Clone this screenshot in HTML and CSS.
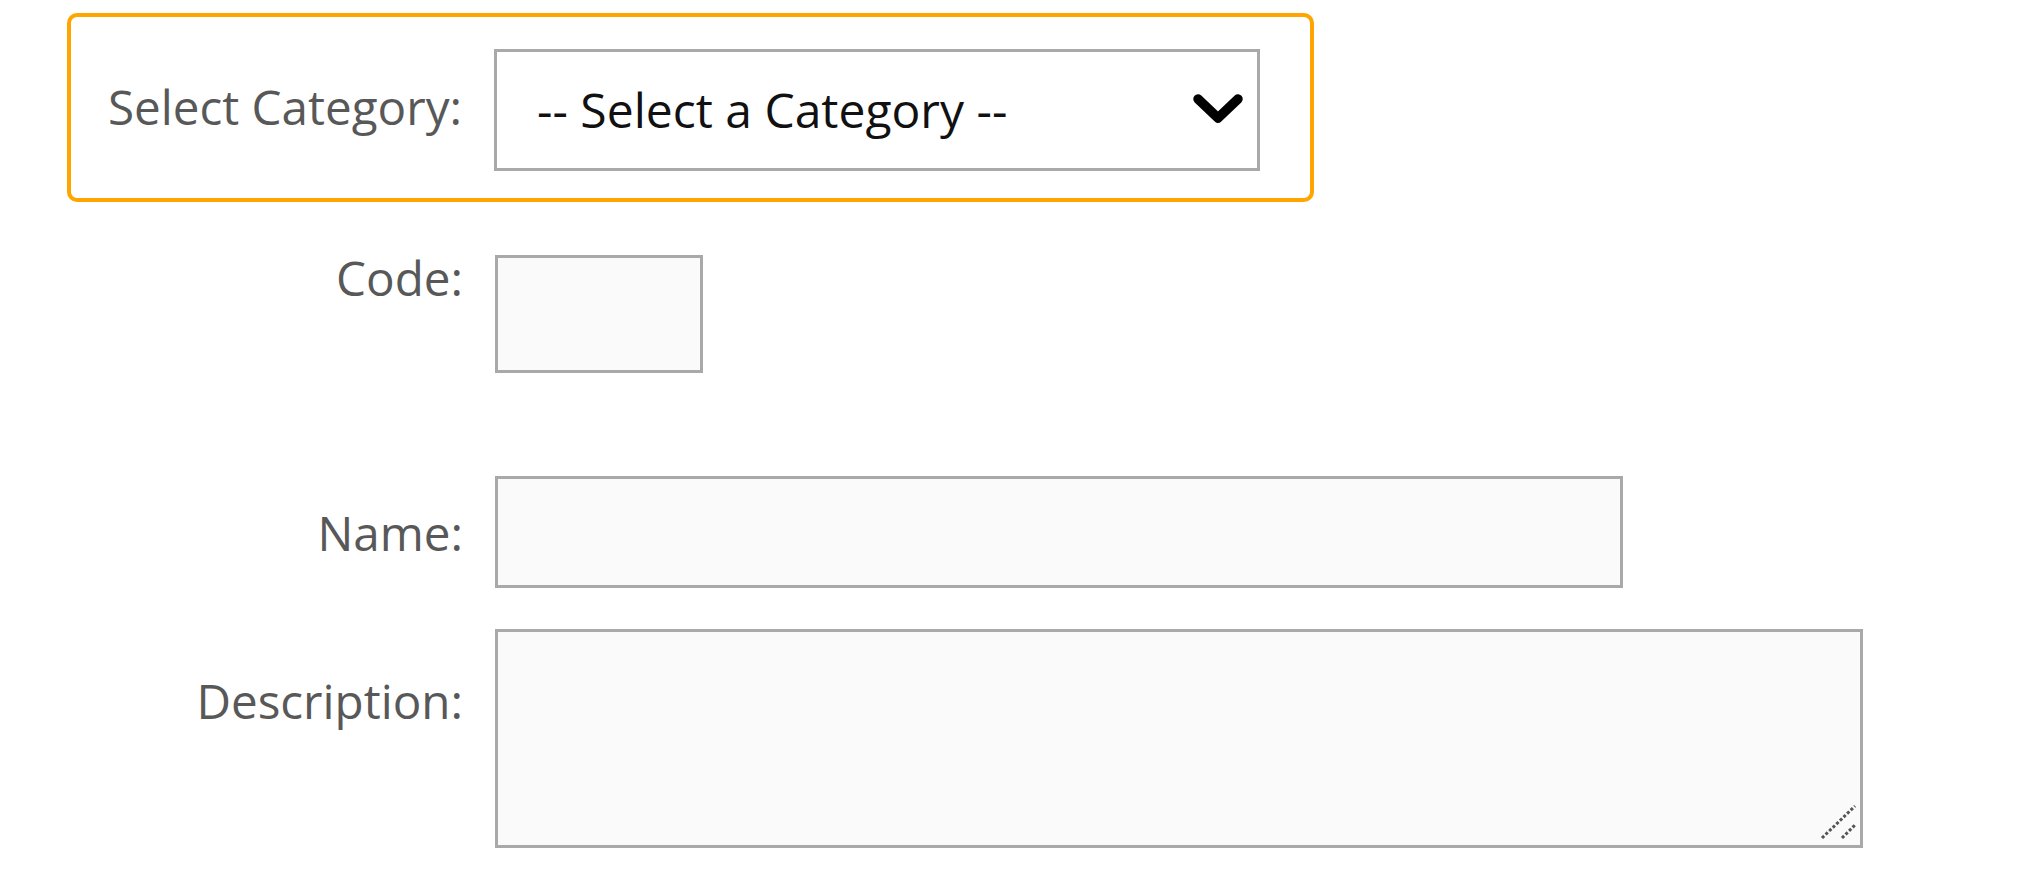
FILE: index.html
```html
<!DOCTYPE html>
<html lang="en">
<head>
<meta charset="utf-8">
<title>Category Form</title>
<link rel="stylesheet" href="styles.css">
</head>
<body>
<div class="page">
  <div class="highlight">
    <label class="lbl lbl-cat">Select Category:</label>
    <div class="select">
      <span class="select-text">-- Select a Category --</span>
      <svg class="chevron" width="52" height="32" viewBox="0 0 52 32"><polyline points="6,6 26,25 46,6" fill="none" stroke="#000" stroke-width="9.5" stroke-linecap="round" stroke-linejoin="round"/></svg>
    </div>
  </div>

  <div class="row row-code">
    <label class="lbl lbl-code">Code:</label>
    <input class="field field-code" type="text">
  </div>

  <div class="row row-name">
    <label class="lbl">Name:</label>
    <input class="field field-name" type="text">
  </div>

  <div class="row row-desc">
    <label class="lbl lbl-desc">Description:</label>
    <div class="ta-wrap">
      <textarea class="field field-desc"></textarea>
      <svg class="grip" width="38" height="36" viewBox="0 0 38 36"><line x1="2" y1="34" x2="35" y2="2" stroke="#555" stroke-width="3" stroke-dasharray="3 2"/><line x1="22" y1="34" x2="35" y2="21" stroke="#555" stroke-width="3" stroke-dasharray="3 2"/></svg>
    </div>
  </div>
</div>
</body>
</html>
```
FILE: styles.css
```css
html, body {
  margin: 0;
  padding: 0;
  background: #ffffff;
}

.page {
  padding: 13px 0 0 67px;
  font-family: "Open Sans", "Noto Sans", sans-serif;
}

.highlight {
  box-sizing: border-box;
  width: 1247px;
  height: 189px;
  border: 4px solid #ffa500;
  border-radius: 10px;
  display: flex;
  align-items: flex-start;
  padding-top: 32px;
}

.lbl {
  font-size: 47.6px;
  line-height: 47px;
  color: #585858;
  text-align: right;
  flex: none;
  width: 396px;
}

.lbl-cat {
  width: 391px;
  margin-top: 34px;
}

.select {
  box-sizing: border-box;
  width: 766px;
  height: 122px;
  margin-left: 32px;
  border: 3px solid #a9a9a9;
  background: #ffffff;
  display: flex;
  align-items: center;
  justify-content: space-between;
  padding: 0 13px 0 40px;
}

.select-text {
  font-size: 48px;
  line-height: 48px;
  color: #111111;
}

.chevron {
  display: block;
  margin-top: -2px;
}

.row {
  display: flex;
  align-items: flex-start;
}

.row-code {
  margin-top: 53px;
}

.row-name {
  margin-top: 103px;
  align-items: center;
}

.row-desc {
  margin-top: 41px;
}

.lbl-code {
  margin-top: -1px;
}

.lbl-desc {
  margin-top: 48px;
}

.field {
  box-sizing: border-box;
  margin: 0 0 0 32px;
  border: 3px solid #a9a9a9;
  background: #fafafa;
  font-family: "Open Sans", sans-serif;
  font-size: 40px;
  padding: 0 10px;
  outline: none;
}

.field-code {
  width: 208px;
  height: 118px;
}

.field-name {
  width: 1128px;
  height: 112px;
}

.ta-wrap {
  position: relative;
  margin-left: 32px;
  width: 1368px;
  height: 219px;
}

.field-desc {
  display: block;
  margin: 0;
  width: 1368px;
  height: 219px;
  resize: none;
}

.grip {
  position: absolute;
  right: 5px;
  bottom: 8px;
}
```
